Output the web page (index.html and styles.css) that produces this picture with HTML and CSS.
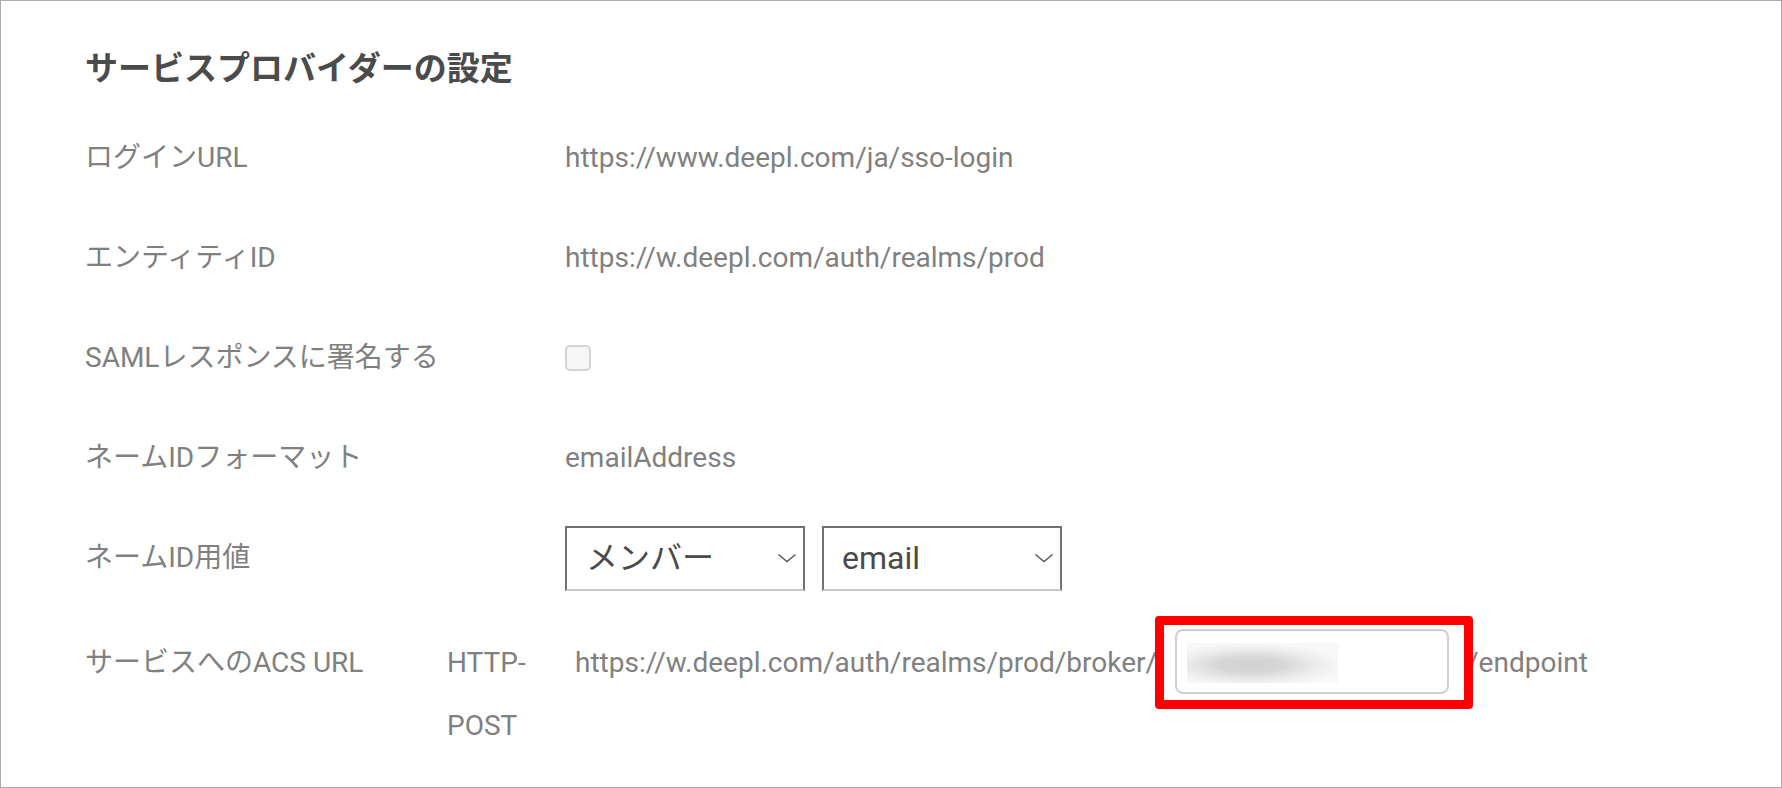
FILE: index.html
```html
<!DOCTYPE html>
<html lang="ja">
<head>
<meta charset="utf-8">
<title>サービスプロバイダーの設定</title>
<link rel="stylesheet" href="styles.css">
</head>
<body>
<div class="panel">
  <h2 class="title">サービスプロバイダーの設定</h2>
  <div class="row">
    <div class="label">ログインURL</div>
    <div class="value">https://www.deepl.com/ja/sso-login</div>
  </div>
  <div class="row">
    <div class="label">エンティティID</div>
    <div class="value">https://w.deepl.com/auth/realms/prod</div>
  </div>
  <div class="row">
    <div class="label">SAMLレスポンスに署名する</div>
    <div class="value"><span class="checkbox"></span></div>
  </div>
  <div class="row">
    <div class="label">ネームIDフォーマット</div>
    <div class="value">emailAddress</div>
  </div>
  <div class="row">
    <div class="label">ネームID用値</div>
    <div class="value selects">
      <div class="select select-member">
        <span>メンバー</span>
        <svg class="chev" width="20" height="10" viewBox="0 0 20 10"><polyline points="1.5,1.5 10,8.5 18.5,1.5" fill="none" stroke="#555" stroke-width="1.4"/></svg>
      </div>
      <div class="select select-email">
        <span>email</span>
        <svg class="chev" width="20" height="10" viewBox="0 0 20 10"><polyline points="1.5,1.5 10,8.5 18.5,1.5" fill="none" stroke="#555" stroke-width="1.4"/></svg>
      </div>
    </div>
  </div>
  <div class="acs">
    <div class="acs-label">サービスへのACS URL</div>
    <div class="binding">HTTP-<wbr>POST</div>
    <div class="url">https://w.deepl.com/auth/realms/prod/broker/<span class="field"><span class="blurred"></span><span class="mark"></span></span>/endpoint</div>
  </div>
</div>
</body>
</html>
```
FILE: styles.css
```css
* { box-sizing: border-box; }
html, body { margin: 0; padding: 0; background: #fff; }
body { font-family: Roboto, "Noto Sans CJK JP", sans-serif; }

.panel {
  width: 1782px;
  height: 788px;
  border: 1px solid #aaaaaa;
  padding: 41px 0 0 84px;
  overflow: hidden;
}

.title {
  margin: 0;
  height: 66px;
  font-family: "Noto Sans CJK JP", sans-serif;
  font-size: 33px;
  line-height: 48px;
  font-weight: 700;
  color: #4b4b4b;
}

.row {
  display: grid;
  grid-template-columns: 480px 1fr;
  align-items: center;
  height: 100px;
  font-size: 28px;
  line-height: 40px;
  color: #808080;
}

.value { display: flex; align-items: center; white-space: nowrap; }

.checkbox {
  display: block;
  width: 26px;
  height: 26px;
  border: 2px solid #d3d3d3;
  border-radius: 5px;
  background: #f6f6f6;
}

.selects { gap: 17px; }

.select {
  display: flex;
  align-items: center;
  justify-content: space-between;
  width: 240px;
  height: 65px;
  border: 2px solid #727272;
  border-bottom-color: #c9c9c9;
  padding: 0 6px 0 19px;
  font-size: 32px;
  line-height: 40px;
  color: #4a4a4a;
}
.select-email { padding-left: 18px; }
.chev { display: block; flex: none; }

.acs {
  display: flex;
  align-items: baseline;
  padding-top: 21px;
  font-size: 28px;
  line-height: 63px;
  color: #808080;
}
.acs-label { width: 362px; flex: none; }
.binding { width: 100px; margin-right: 28px; flex: none; }
.url { white-space: nowrap; line-height: 40px; }

.field {
  display: inline-block;
  position: relative;
  width: 274px;
  height: 65px;
  border: 2px solid #cfcfcf;
  border-radius: 8px;
  background: #fff;
  vertical-align: -22px;
  margin: 0 18px 0 18px;
}
.blurred {
  display: block;
  margin: 12px 0 0 10px;
  width: 151px;
  height: 40px;
  background: radial-gradient(ellipse 62% 55% at 42% 55%, #d0d0d0 0%, #d6d6d6 35%, #ececec 70%, #f8f8f8 100%);
}
.mark {
  position: absolute;
  left: -22px;
  top: -15px;
  width: 318px;
  height: 93px;
  border: 9px solid #ff0000;
  border-radius: 4px;
}
```
